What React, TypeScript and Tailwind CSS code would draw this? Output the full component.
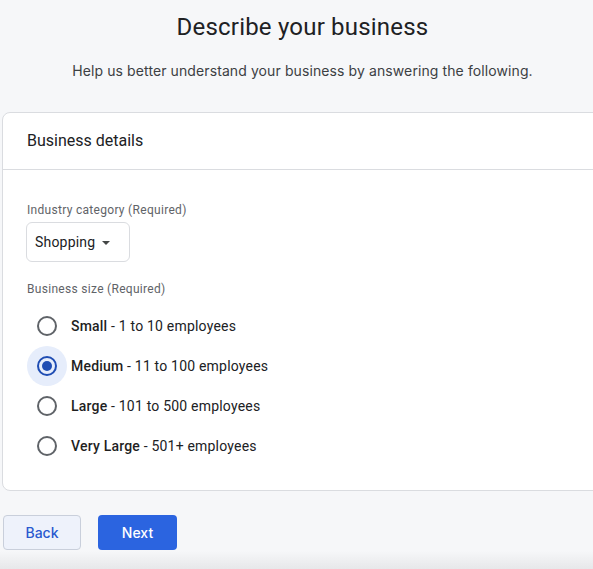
import { useState } from "react";

const sizes = [
  { id: "small", name: "Small", range: "1 to 10 employees" },
  { id: "medium", name: "Medium", range: "11 to 100 employees" },
  { id: "large", name: "Large", range: "101 to 500 employees" },
  { id: "xlarge", name: "Very Large", range: "501+ employees" },
];

function Radio({ checked }: { checked: boolean }) {
  return (
    <span
      className={`flex h-10 w-10 items-center justify-center rounded-full ${
        checked ? "bg-[#e6edfb]" : ""
      }`}
    >
      <span
        className={`flex h-5 w-5 items-center justify-center rounded-full border-2 ${
          checked ? "border-[#1f4db3]" : "border-[#5f6368]"
        }`}
      >
        {checked && <span className="h-2.5 w-2.5 rounded-full bg-[#1f4db3]" />}
      </span>
    </span>
  );
}

export default function App() {
  const [size, setSize] = useState("medium");

  return (
    <div className="h-[569px] overflow-hidden bg-[#f6f7f9] font-['Roboto',sans-serif] text-[#202124]">
      <div className="ml-[2px] w-[601px]">
        <h1 className="pt-[11px] text-center text-[24px] leading-8 font-normal tracking-[0.2px] text-[#202124]">
          Describe your business
        </h1>
        <p className="mt-[18px] text-center font-['Inter',sans-serif] text-[14px] leading-5 tracking-[0.1px] text-[#3c4043]">
          Help us better understand your business by answering the following.
        </p>

        <div className="mt-[31px] rounded-lg border border-[#dadce0] bg-white">
          <div className="flex h-[57px] items-center border-b border-[#dadce0] px-6">
            <h2 className="text-[16px] leading-6 text-[#202124]">Business details</h2>
          </div>

          <div className="px-6 pt-[32px] pb-[24px]">
            <div className="text-[12px] leading-4 tracking-[0.3px] text-[#5f6368]">
              Industry category (Required)
            </div>
            <button
              type="button"
              className="mt-1 -ml-px flex h-10 w-[104px] items-center gap-[7px] rounded-md border border-[#dadce0] bg-white pl-2 text-[14px] tracking-[0.2px] text-[#202124]"
            >
              Shopping
              <svg width="8" height="4" viewBox="0 0 8 4" className="mt-px">
                <path d="M0 0h8L4 4z" fill="#444746" />
              </svg>
            </button>

            <div className="mt-[19px] text-[12px] leading-4 tracking-[0.3px] text-[#5f6368]">
              Business size (Required)
            </div>
            <div className="mt-[9px] flex flex-col">
              {sizes.map((s) => (
                <label
                  key={s.id}
                  className="flex h-10 cursor-pointer items-center"
                  onClick={() => setSize(s.id)}
                >
                  <Radio checked={size === s.id} />
                  <span className="ml-1 text-[14px] tracking-[0.2px] text-[#202124]">
                    <span className="font-medium text-[#1f1f1f]">{s.name}</span> - {s.range}
                  </span>
                </label>
              ))}
            </div>
          </div>
        </div>

        <div className="mt-[24px] flex gap-[17px] font-['Inter',sans-serif]">
          <button
            type="button"
            className="ml-px h-[35px] w-[78px] rounded-[4px] border border-[#c9cfdb] bg-[#eef2fb] text-[14px] font-medium text-[#2a59cf]"
          >
            Back
          </button>
          <button
            type="button"
            className="h-[35px] w-[79px] rounded-[4px] bg-[#2b64e0] text-[14px] font-medium text-white"
          >
            Next
          </button>
        </div>
      </div>
      <div className="mt-px h-[20px] bg-gradient-to-b from-[#f6f7f9] to-[#e5e6e8]" />
    </div>
  );
}
